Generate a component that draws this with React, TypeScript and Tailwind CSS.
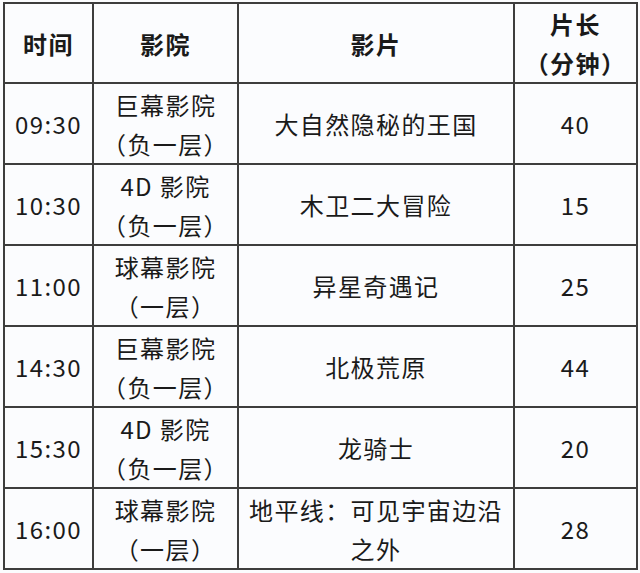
const rows = [
  { time: "09:30", hall: ["巨幕影院", "（负一层）"], film: "大自然隐秘的王国", len: "40" },
  { time: "10:30", hall: ["4D 影院", "（负一层）"], film: "木卫二大冒险", len: "15" },
  { time: "11:00", hall: ["球幕影院", "（一层）"], film: "异星奇遇记", len: "25" },
  { time: "14:30", hall: ["巨幕影院", "（负一层）"], film: "北极荒原", len: "44" },
  { time: "15:30", hall: ["4D 影院", "（负一层）"], film: "龙骑士", len: "20" },
  { time: "16:00", hall: ["球幕影院", "（一层）"], film: "地平线：可见宇宙边沿之外", len: "28" },
];

const cell = "border-2 border-[#3d3d3d] text-center align-middle p-0";

export default function App() {
  return (
    <div className="min-h-[573px] w-[640px] bg-[#fbfcfe] pl-[3px] pt-[2px] font-['Noto_Sans_CJK_SC','Noto_Sans',sans-serif] text-[24px] leading-[39px] tracking-[1.4px] text-[#1a1a1a]">
      <table className="table-fixed border-collapse">
        <colgroup>
          <col className="w-[89px]" />
          <col className="w-[145px]" />
          <col className="w-[276px]" />
          <col className="w-[123px]" />
        </colgroup>
        <thead>
          <tr className="h-[80px] font-bold">
            <th className={cell}>时间</th>
            <th className={cell}>影院</th>
            <th className={cell}>影片</th>
            <th className={cell}>
              <div>片长</div>
              <div>（分钟）</div>
            </th>
          </tr>
        </thead>
        <tbody>
          {rows.map((r) => (
            <tr key={r.time} className="h-[81px]">
              <td className={cell}>{r.time}</td>
              <td className={cell}>
                <div>{r.hall[0]}</div>
                <div>{r.hall[1]}</div>
              </td>
              <td className={`${cell} px-[9px]`}>{r.film}</td>
              <td className={cell}>{r.len}</td>
            </tr>
          ))}
        </tbody>
      </table>
    </div>
  );
}
